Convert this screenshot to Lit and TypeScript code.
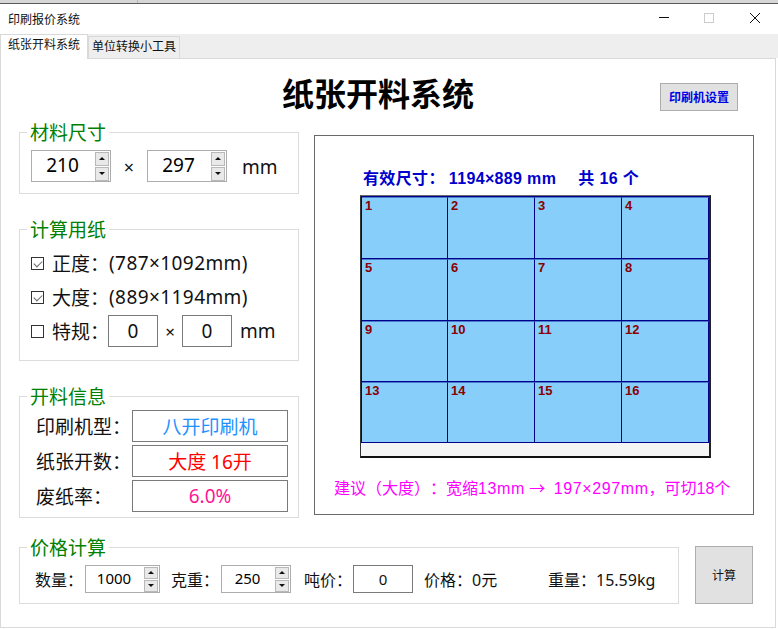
import { LitElement, html, css } from "lit";
import { customElement, property } from "lit/decorators.js";

const SANS = css`"Noto Sans", "Noto Sans CJK SC", sans-serif`;

@customElement("spin-box")
export class SpinBox extends LitElement {
  @property() value = "0";

  render() {
    return html`
      <span class="value">${this.value}</span>
      <span class="btns">
        <span class="btn"><i class="up"></i></span>
        <span class="btn"><i class="down"></i></span>
      </span>
    `;
  }

  static styles = css`
    :host {
      display: flex;
      box-sizing: border-box;
      align-items: center;
      border: 1px solid #adadad;
      background: #fff;
      height: 32px;
      width: 80px;
      padding-right: 1px;
      font-size: inherit;
      color: #000;
    }
    .value {
      flex: 1;
      text-align: center;
      line-height: 1;
      padding: 0 2px 2px 0;
    }
    .btns {
      display: flex;
      flex-direction: column;
      gap: 1px;
    }
    .btn {
      box-sizing: border-box;
      display: flex;
      align-items: center;
      justify-content: center;
      width: 14px;
      height: var(--btn-h, 14px);
      background: #e9e9e9;
      border: 1px solid #b8b8b8;
    }
    i {
      display: block;
      width: 0;
      height: 0;
      border-left: 3px solid transparent;
      border-right: 3px solid transparent;
    }
    .up {
      border-bottom: 3px solid #111;
    }
    .down {
      border-top: 3px solid #111;
    }
  `;
}

@customElement("app-root")
export class AppRoot extends LitElement {
  cells = Array.from({ length: 16 }, (_, i) => i + 1);

  render() {
    return html`
      <div class="top-edge"></div>
      <div class="titlebar">
        <span class="win-title">印刷报价系统</span>
        <svg class="ctl" style="left:659px" width="10" height="10" viewBox="0 0 10 10">
          <path d="M0 4.5H10" stroke="#111" fill="none" />
        </svg>
        <svg class="ctl" style="left:704px" width="10" height="10" viewBox="0 0 10 10">
          <rect x=".5" y=".5" width="9" height="9" stroke="#ccc" fill="none" />
        </svg>
        <svg class="ctl" style="left:750px" width="10" height="10" viewBox="0 0 10 10">
          <path d="M0 0L10 10M10 0L0 10" stroke="#111" fill="none" />
        </svg>
      </div>
      <div class="tabs">
        <div class="tab active">纸张开料系统</div>
        <div class="tab">单位转换小工具</div>
      </div>
      <div class="page">
        <div class="title-row">
          <h1>纸张开料系统</h1>
          <button class="settings">印刷机设置</button>
        </div>
        <div class="columns">
          <div class="left">
            <section class="group material">
              <span class="legend">材料尺寸</span>
              <spin-box value="210"></spin-box>
              <span class="times">×</span>
              <spin-box value="297"></spin-box>
              <span class="unit">mm</span>
            </section>
            <section class="group paper">
              <span class="legend">计算用纸</span>
              <div class="check-row">
                <span class="check on"></span><span class="name">正度：</span><span class="spec">(787×1092mm)</span>
              </div>
              <div class="check-row">
                <span class="check on"></span><span class="name">大度：</span><span class="spec">(889×1194mm)</span>
              </div>
              <div class="check-row">
                <span class="check"></span><span class="name">特规：</span>
                <span class="box custom">0</span>
                <span class="times-small">×</span>
                <span class="box custom">0</span>
                <span class="unit-small">mm</span>
              </div>
            </section>
            <section class="group info">
              <span class="legend">开料信息</span>
              <div class="info-row">
                <span class="info-name">印刷机型：</span>
                <span class="box info-val blue">八开印刷机</span>
              </div>
              <div class="info-row">
                <span class="info-name">纸张开数：</span>
                <span class="box info-val red">大度 16开</span>
              </div>
              <div class="info-row">
                <span class="info-name">废纸率：</span>
                <span class="box info-val pink">6.0%</span>
              </div>
            </section>
          </div>
          <div class="preview">
            <div class="preview-head">有效尺寸：<span class="size">1194×889 mm</span><span class="count">共 16 个</span></div>
            <div class="sheet">
              <div class="cells">
                ${this.cells.map((n) => html`<div class="cell">${n}</div>`)}
              </div>
            </div>
            <div class="advice">建议（大度）：宽缩<span class="wide">13mm</span> <span class="arrow">→</span> <span class="wide">197×297mm</span>，可切18个</div>
          </div>
        </div>
        <div class="bottom">
          <section class="group price">
            <span class="legend">价格计算</span>
            <span class="p-label" style="width:50px">数量：</span>
            <spin-box class="small" style="width:75px" value="1000"></spin-box>
            <span class="p-label" style="width:50px;margin-left:11px">克重：</span>
            <spin-box class="small" style="width:70px" value="250"></spin-box>
            <span class="p-label" style="width:49px;margin-left:13px">吨价：</span>
            <span class="box price-input">0</span>
            <span class="p-label" style="width:124px;margin-left:11px">价格：0元</span>
            <span class="p-label">重量：15.59kg</span>
          </section>
          <button class="calc">计算</button>
        </div>
      </div>
    `;
  }

  static styles = css`
    :host {
      display: block;
      position: relative;
      width: 778px;
      height: 629px;
      overflow: hidden;
      background: #fff;
      font-family: ${SANS};
      color: #111;
    }
    * {
      box-sizing: border-box;
    }
    .top-edge {
      height: 4px;
      background: linear-gradient(#b8b8b8, #b8b8b8) no-repeat 137px 0 / 1px 100%, #d6d6d6;
      border-bottom: 1px solid #5a5a5a;
    }
    .titlebar {
      height: 30px;
      display: flex;
      align-items: center;
      padding-left: 8px;
      background: #fff;
    }
    .win-title {
      font-size: 12px;
    }
    .ctl {
      position: absolute;
      top: 13px;
    }
    .tabs {
      height: 24px;
      background: #eee;
      display: flex;
      align-items: flex-end;
    }
    .tab {
      height: 22px;
      width: 92px;
      border: 1px solid #d9d9d9;
      border-bottom: none;
      font-size: 12px;
      line-height: 20px;
      text-align: center;
    }
    .tab.active {
      height: 25px;
      width: 88px;
      background: #fff;
      position: relative;
      top: 1px;
      z-index: 1;
    }
    .page {
      width: 776px;
      height: 570px;
      border: 1px solid #d9d9d9;
      background: #fff;
      padding-left: 18px;
    }
    .title-row {
      display: flex;
      align-items: flex-start;
      width: 735px;
      height: 73px;
    }
    h1 {
      margin: 13px 0 0 263px;
      font-size: 32px;
      line-height: 44px;
      font-weight: 700;
      color: #000;
      white-space: nowrap;
    }
    button {
      font-family: inherit;
      border: 1px solid #adadad;
      background: #e1e1e1;
      padding: 0;
      font-size: 12px;
    }
    .settings {
      margin: 24px 16px 0 auto;
      width: 78px;
      height: 28px;
      color: #0000e6;
      font-weight: 700;
    }
    .columns {
      display: flex;
      gap: 15px;
    }
    .left {
      width: 280px;
      display: flex;
      flex-direction: column;
      gap: 35px;
    }
    .group {
      position: relative;
      border: 1px solid #dcdcdc;
      font-size: 19px;
    }
    .legend {
      position: absolute;
      top: -12px;
      left: 7px;
      padding: 0 3px;
      background: #fff;
      font-size: 19px;
      line-height: 24px;
      color: #008000;
    }
    .material {
      height: 62px;
      display: flex;
      align-items: flex-start;
      padding: 17px 0 0 11px;
    }
    .times {
      width: 36px;
      text-align: center;
      line-height: 34px;
      font-size: 18px;
    }
    .unit {
      margin-left: 15px;
      line-height: 34px;
    }
    .paper {
      height: 132px;
      padding: 16px 0 0 11px;
      display: flex;
      flex-direction: column;
    }
    .check-row {
      display: flex;
      align-items: center;
      height: 34px;
      white-space: nowrap;
    }
    .check {
      width: 13px;
      height: 13px;
      border: 1px solid #333;
      margin-right: 8px;
      position: relative;
    }
    .check.on::after {
      content: "";
      position: absolute;
      left: 2px;
      top: 1px;
      width: 7px;
      height: 4px;
      border-left: 1px solid #666;
      border-bottom: 1px solid #666;
      transform: rotate(-45deg) translate(-1px, 1px);
    }
    .name {
      width: 56px;
    }
    .spec {
      margin-left: 1px;
      letter-spacing: 0.42px;
    }
    .box {
      display: flex;
      align-items: center;
      justify-content: center;
      border: 1px solid #7a7a7a;
      background: #fff;
    }
    .custom {
      width: 50px;
      height: 32px;
    }
    .times-small {
      width: 24px;
      text-align: center;
      font-size: 17px;
    }
    .unit-small {
      margin-left: 8px;
    }
    .info {
      height: 122px;
      padding: 13px 0 0 16px;
      display: flex;
      flex-direction: column;
      gap: 3px;
    }
    .info-row {
      display: flex;
      align-items: center;
      height: 32px;
    }
    .info-name {
      width: 96px;
      white-space: nowrap;
    }
    .info-val {
      width: 156px;
      height: 32px;
    }
    .blue {
      color: #1e90ff;
    }
    .red {
      color: #ff0000;
    }
    .pink {
      color: #ff1493;
    }
    .preview {
      width: 440px;
      height: 380px;
      margin-top: 3px;
      border: 1px solid #696969;
      padding: 32px 0 0 45px;
    }
    .preview-head {
      height: 27px;
      padding-left: 3px;
      font-family: "Liberation Sans", "Noto Sans CJK SC", sans-serif;
      font-size: 16px;
      font-weight: 700;
      letter-spacing: 0.35px;
      line-height: 22px;
      color: #0000cd;
      white-space: nowrap;
    }
    .size {
      margin-left: 4px;
    }
    .count {
      margin-left: 22px;
    }
    .sheet {
      width: 351px;
      height: 263px;
      background: #f5f5f5;
      border-style: solid;
      border-width: 1px 2px 2px 1px;
      border-color: #696969 #222 #111 #333;
    }
    .cells {
      display: grid;
      grid-template-columns: 86px 87px 87px 87px;
      grid-template-rows: 62px 62px 61px 61px;
      width: 348px;
      border-left: 1px solid #00008b;
      border-top: 1px solid #00008b;
    }
    .cell {
      border-right: 1px solid #00008b;
      border-bottom: 1px solid #00008b;
      border-top: 1px solid #4a78cc;
      background: #87cefa;
      font-family: "Liberation Sans", sans-serif;
      font-size: 13px;
      font-weight: 700;
      color: #8b0000;
      padding: 1px 0 0 3px;
      line-height: 14px;
    }
    .advice {
      margin: 18px 0 0 -26px;
      font-family: "Liberation Sans", "Noto Sans CJK SC", sans-serif;
      font-size: 16px;
      line-height: 22px;
      color: #ff00ff;
      white-space: nowrap;
      text-spacing-trim: space-all;
    }
    .wide {
      letter-spacing: 0.6px;
    }
    .arrow {
      font-family: "Noto Sans CJK SC", sans-serif;
      margin-right: 4px;
    }
    .bottom {
      display: flex;
      align-items: flex-start;
      gap: 16px;
      margin-top: 29px;
    }
    .price {
      width: 660px;
      height: 57px;
      display: flex;
      align-items: center;
      padding: 7px 0 0 15px;
      font-size: 16px;
      white-space: nowrap;
    }
    .p-label {
      display: block;
    }
    spin-box.small {
      height: 28px;
      font-size: 15px;
      --btn-h: 12px;
    }
    .price-input {
      width: 60px;
      height: 28px;
      font-size: 15px;
    }
    .calc {
      width: 58px;
      height: 58px;
      margin-top: -1px;
      color: #111;
    }
  `;
}
